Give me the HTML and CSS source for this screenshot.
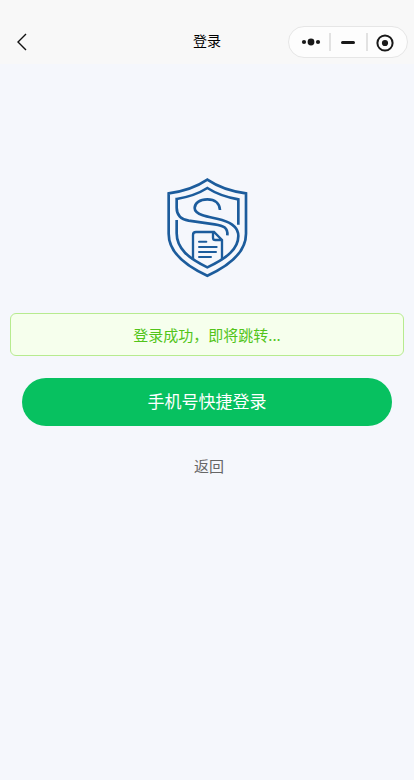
FILE: index.html
```html
<!DOCTYPE html>
<html lang="zh-CN">
<head>
<meta charset="utf-8">
<meta name="viewport" content="width=device-width, initial-scale=1">
<title>登录</title>
<link rel="stylesheet" href="styles.css">
</head>
<body>
<header class="navbar">
  <div class="nav-side">
    <button class="icon-button nav-back" type="button" aria-label="后退">
      <svg width="12" height="18" viewBox="0 0 12 18" fill="none" stroke="#111" stroke-width="1.400"><path d="M10 1 2 9l8 8"/></svg>
    </button>
  </div>
  <h1 class="nav-title">登录</h1>
  <div class="nav-side nav-side-end">
    <div class="capsule">
      <button class="icon-button" type="button" aria-label="更多">
        <svg width="20" height="20" viewBox="0 0 20 20" fill="#191919"><circle cx="3" cy="10" r="2.1"/><circle cx="10" cy="10" r="3.4"/><circle cx="17" cy="10" r="2.1"/></svg>
      </button>
      <span class="divider"></span>
      <button class="icon-button" type="button" aria-label="最小化">
        <svg width="20" height="20" viewBox="0 0 20 20" stroke="#191919" stroke-width="3" stroke-linecap="round"><path d="M4.500 10.500h11"/></svg>
      </button>
      <span class="divider"></span>
      <button class="icon-button" type="button" aria-label="关闭">
        <svg width="20" height="20" viewBox="0 0 20 20"><circle cx="10" cy="11" r="7.600" fill="none" stroke="#191919" stroke-width="2"/><circle cx="10" cy="11" r="3.100" fill="#191919"/></svg>
      </button>
    </div>
  </div>
</header>
<main class="login">
  <svg class="logo" viewBox="0 0 312 345" fill="none" stroke="#1c5c9c" stroke-width="8" role="img" aria-label="盾牌标志">
    <path d="M157 29C126 50 82 65 41 70V191C41 247 91 287 157 317C223 287 273 247 273 191V70C232 65 188 50 157 29Z"/>
    <path d="M65 150V190C65 236 101 265 157 292C217 264 250 236 250 198C250 178 235 160 201 150C182 144 160 142 143 136C126 130 119 123 119 114C119 99 134 88 157 88C180 88 194 100 195 120"/>
    <path d="M250 164V88C214 82 182 70 157 54C132 70 101 81 65 87V113C65 133 74 147 101 152L179 163C207 167 219 174 217 196"/>
    <path d="M114 270V195Q114 186 123 186H177L201 210V268M174 187V203Q174 210 181 210H201" stroke-width="7"/>
    <path d="M132 215h22M132 231h53M132 246h51M132 261h36" stroke-width="6" stroke-linecap="round"/>
  </svg>
  <p class="notice" role="status">登录成功，即将跳转...</p>
  <div class="actions">
    <button class="primary" type="button">手机号快捷登录</button>
    <a class="back" href="#">返回</a>
  </div>
</main>
</body>
</html>
```

FILE: styles.css
```css
* {
  box-sizing: border-box;
}

body {
  margin: 0;
  min-height: 100vh;
  background: #f5f7fc;
  font-family: "Noto Sans CJK SC", sans-serif;
}

button {
  border: 0;
  padding: 0;
  background: none;
  font: inherit;
}

svg {
  display: block;
}

.navbar {
  display: grid;
  grid-template-columns: 1fr auto 1fr;
  align-items: center;
  height: 64px;
  padding: 20px 6px 0;
  background: #f8f8f8;
}

.nav-side {
  display: flex;
}

.nav-back {
  padding-left: 10px;
}

.nav-side-end {
  justify-content: flex-end;
}

.nav-title {
  margin: 0;
  padding-bottom: 4px;
  color: #000;
  font-size: 14px;
  font-weight: 400;
  line-height: 20px;
}

.capsule {
  display: flex;
  align-items: center;
  justify-content: space-between;
  width: 120px;
  height: 32px;
  padding: 0 12px;
  border: 1px solid #e6e6e6;
  border-radius: 16px;
  background: #fdfdfd;
}

.divider {
  width: 2px;
  height: 18px;
  background: #e2e2e2;
}

.login {
  display: flex;
  flex-direction: column;
  padding: 106px 10px 24px;
}

.logo {
  width: 104px;
  height: 115px;
  align-self: center;
}

.notice {
  margin: 28px 0 22px;
  padding: 10px;
  border: 1px solid #b7eb8f;
  border-radius: 6px;
  background: #f6ffed;
  color: #52c41a;
  font-size: 15px;
  line-height: 21px;
  text-align: center;
}

.actions {
  display: flex;
  flex-direction: column;
  align-items: center;
  gap: 29px;
  padding: 0 12px;
}

.primary {
  width: 100%;
  height: 48px;
  padding-bottom: 3px;
  border-radius: 24px;
  background: #07c160;
  color: #fff;
  font-size: 17px;
}

.back {
  padding-left: 4px;
  color: #666;
  font-size: 15px;
  line-height: 21px;
  text-decoration: none;
}
```
